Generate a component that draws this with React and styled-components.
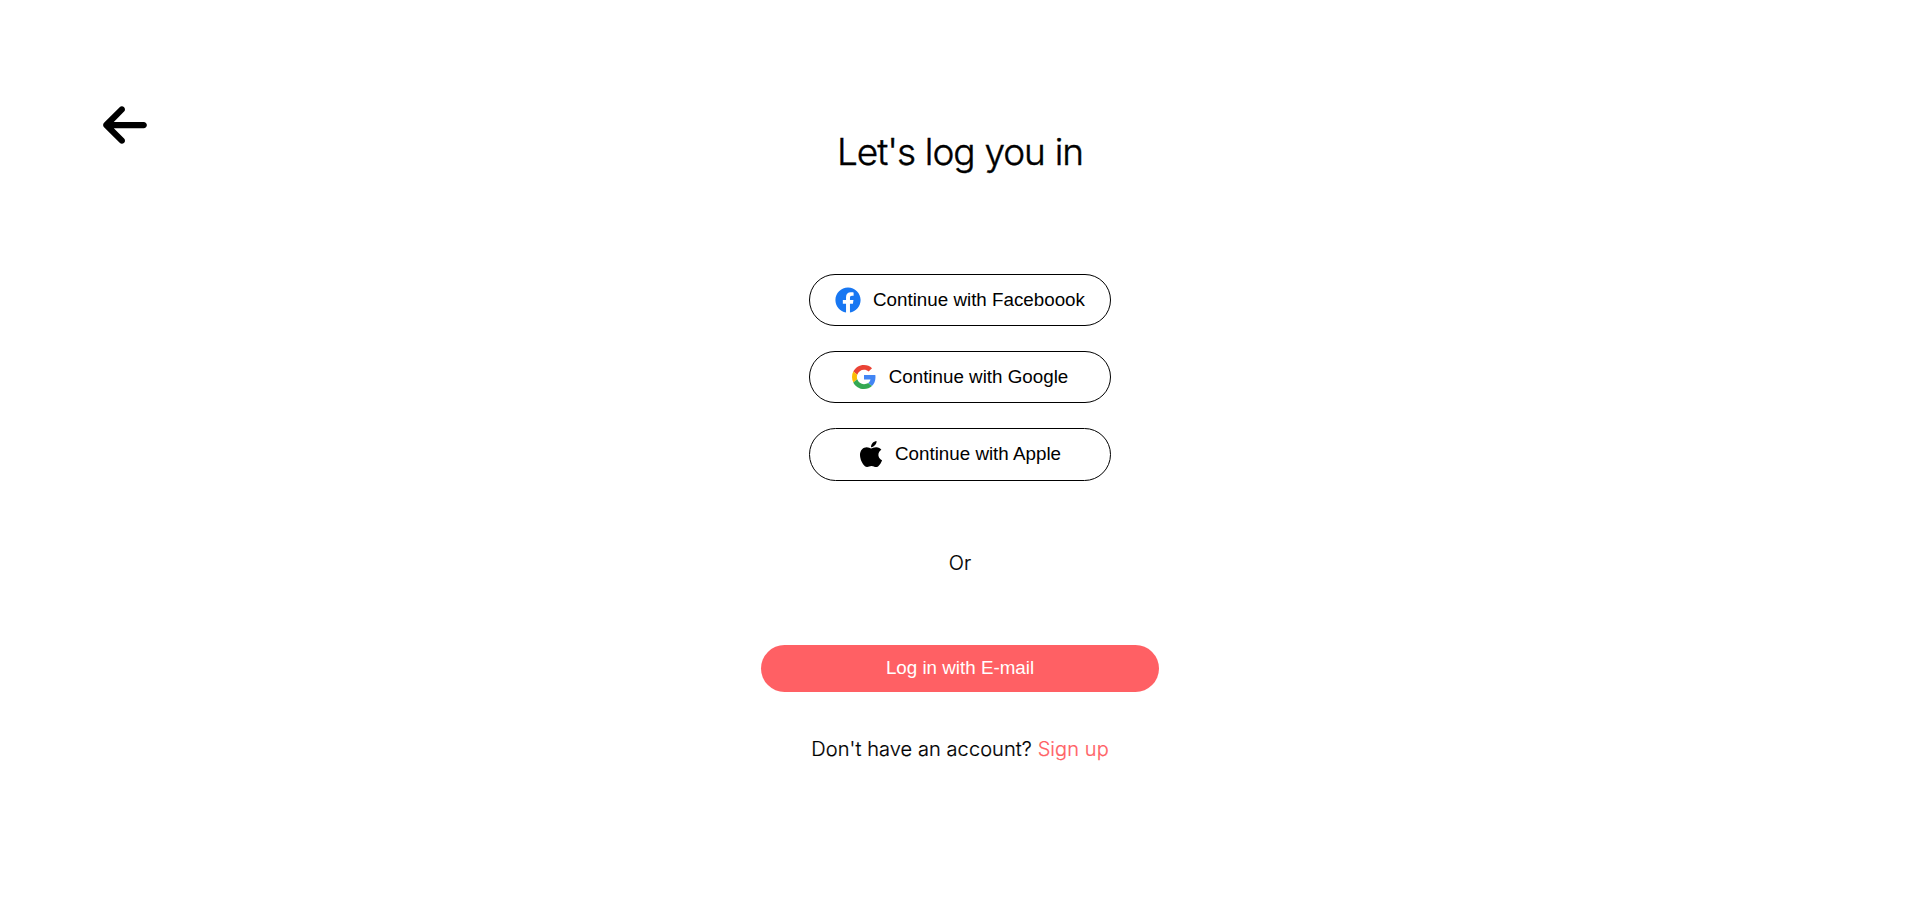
import React from "react";
import styled, { createGlobalStyle } from "styled-components";
import { FaApple, FaFacebook } from "react-icons/fa";
import { FaArrowLeft } from "react-icons/fa6";

const GlobalStyle = createGlobalStyle`
  * {
    box-sizing: border-box;
  }

  body {
    margin: 0;
    background: #fff;
    color: #000;
    font-family: Inter, sans-serif;
    font-weight: 300;
  }
`;

const Page = styled.main`
  display: grid;
  grid-template-columns: 1fr auto 1fr;
  min-height: 100vh;
`;

const BackButton = styled.button`
  display: flex;
  justify-self: start;
  align-self: start;
  margin: 100px 0 0 100px;
  padding: 0;
  border: 0;
  background: none;
  color: #000;
  font-size: 50px;
  cursor: pointer;
`;

const Content = styled.section`
  display: flex;
  flex-direction: column;
  align-items: center;
  width: 398px;
  padding-top: 129px;
`;

const Title = styled.h1`
  margin: 0;
  font-size: 37px;
  font-weight: 300;
  letter-spacing: -1.05px;
  word-spacing: 0.5px;
  -webkit-text-stroke: 0.4px #000;
  line-height: 46px;
`;

const Providers = styled.div`
  display: flex;
  flex-direction: column;
  gap: 25px;
  margin-top: 99px;
`;

const Button = styled.button`
  display: flex;
  align-items: center;
  justify-content: center;
  font-family: "Liberation Sans", Arial, sans-serif;
  font-size: 18.8px;
  line-height: 22px;
  cursor: pointer;
`;

const ProviderButton = styled(Button)`
  width: 302px;
  height: ${({ $height }) => $height || 52}px;
  padding: 0 ${({ $inset }) => $inset || 0}px 1px 0;
  border: 1px solid #000;
  border-radius: 27px;
  background: #fff;
  color: #000;
`;

const Icon = styled.span`
  display: flex;
  margin-right: ${({ $gap }) => $gap}px;
  color: ${({ $color }) => $color || "#000"};
  font-size: ${({ $size }) => $size}px;
`;

const Note = styled.p`
  margin: ${({ $top }) => $top}px 0 0;
  font-size: 20px;
  letter-spacing: 0.08px;
  line-height: 24px;
  white-space: nowrap;
  -webkit-text-stroke: 0.2px currentColor;
`;

const EmailButton = styled(Button)`
  width: 100%;
  height: 47px;
  margin-top: 70px;
  padding: 0 0 1px;
  border: 0;
  border-radius: 24px;
  background: #ff6064;
  color: #fff;
`;

const SignUp = styled.a`
  color: #ff6064;
  text-decoration: none;
  -webkit-text-stroke: 0.2px #ff6064;
`;

const GoogleLogo = () => (
  <svg width="24" height="24" viewBox="0 0 48 48" aria-hidden="true">
    <path fill="#EA4335" d="M24 9.5c3.54 0 6.71 1.22 9.21 3.6l6.85-6.85C35.9 2.38 30.47 0 24 0 14.62 0 6.51 5.38 2.56 13.22l7.98 6.19C12.43 13.72 17.74 9.5 24 9.5z" />
    <path fill="#4285F4" d="M46.98 24.55c0-1.57-.15-3.09-.38-4.55H24v9.02h12.94c-.58 2.96-2.26 5.48-4.78 7.18l7.73 6c4.51-4.18 7.09-10.36 7.09-17.65z" />
    <path fill="#FBBC05" d="M10.53 28.59c-.48-1.45-.76-2.99-.76-4.59s.27-3.14.76-4.59l-7.98-6.19C.92 16.46 0 20.12 0 24c0 3.88.92 7.54 2.56 10.78l7.97-6.19z" />
    <path fill="#34A853" d="M24 48c6.48 0 11.93-2.13 15.89-5.81l-7.73-6c-2.15 1.45-4.92 2.3-8.16 2.3-6.26 0-11.57-4.22-13.47-9.91l-7.98 6.19C6.51 42.62 14.62 48 24 48z" />
  </svg>
);

export default function App() {
  return (
    <>
      <GlobalStyle />
      <Page>
        <BackButton aria-label="Back">
          <FaArrowLeft />
        </BackButton>
        <Content>
          <Title>Let's log you in</Title>
          <Providers>
            <ProviderButton>
              <Icon $size={26} $gap={12} $color="#1877f2">
                <FaFacebook />
              </Icon>
              Continue with Faceboook
            </ProviderButton>
            <ProviderButton>
              <Icon $size={24} $gap={13}>
                <GoogleLogo />
              </Icon>
              Continue with Google
            </ProviderButton>
            <ProviderButton $height={53} $inset={3}>
              <Icon $size={30} $gap={9}>
                <FaApple />
              </Icon>
              Continue with Apple
            </ProviderButton>
          </Providers>
          <Note $top={70}>Or</Note>
          <EmailButton>Log in with E-mail</EmailButton>
          <Note $top={45}>
            Don't have an account? <SignUp href="#">Sign up</SignUp>
          </Note>
        </Content>
      </Page>
    </>
  );
}
